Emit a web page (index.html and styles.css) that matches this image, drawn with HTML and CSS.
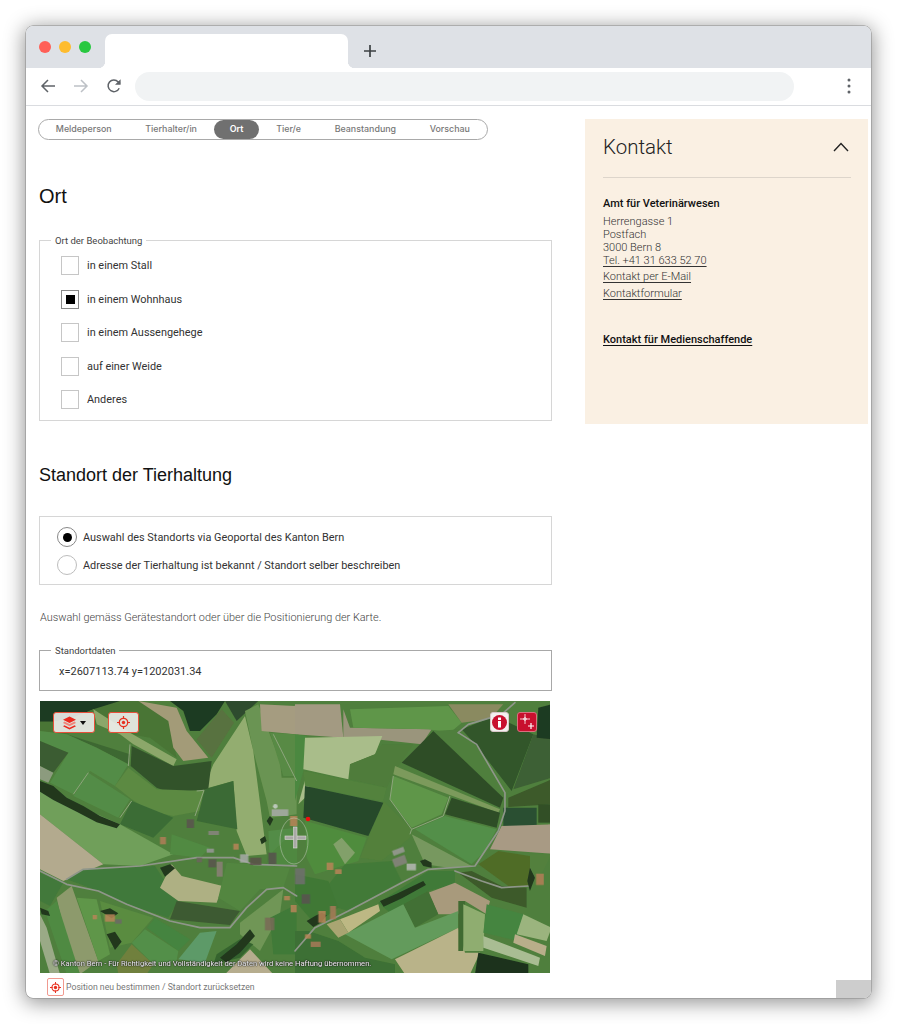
FILE: index.html
```html
<!DOCTYPE html>
<html lang="de">
<head>
<meta charset="utf-8">
<title>Ort</title>
<link rel="stylesheet" href="styles.css">
</head>
<body>
<div class="window">
  <div class="tabstrip">
    <div class="lights"><span class="light red"></span><span class="light yellow"></span><span class="light green"></span></div>
    <div class="tab"></div>
    <svg class="newtab" width="14" height="14" viewBox="0 0 14 14"><path d="M7 1v12M1 7h12" stroke="#3c4043" stroke-width="1.7" fill="none"/></svg>
  </div>
  <div class="toolbar">
    <svg class="tool" width="16" height="16" viewBox="0 0 16 16"><path d="M15 8H2M8 2L2 8l6 6" stroke="#5f6368" stroke-width="1.5" fill="none"/></svg>
    <svg class="tool" width="16" height="16" viewBox="0 0 16 16"><path d="M1 8h13M8 2l6 6-6 6" stroke="#bdc1c6" stroke-width="1.5" fill="none"/></svg>
    <svg class="tool" width="16" height="16" viewBox="0 0 16 16"><path d="M13.2 10.2A5.8 5.8 0 1 1 12.2 3.9L14 5.6" stroke="#5f6368" stroke-width="1.5" fill="none"/><path d="M14.6 1.2v5.6H9z" fill="#5f6368"/></svg>
    <div class="address"></div>
    <svg class="kebab" width="4" height="16" viewBox="0 0 4 16"><circle cx="2" cy="2" r="1.5" fill="#5f6368"/><circle cx="2" cy="8" r="1.5" fill="#5f6368"/><circle cx="2" cy="14" r="1.5" fill="#5f6368"/></svg>
  </div>
  <div class="page">
    <main class="main">
      <nav class="stepper">
        <span class="step">Meldeperson</span>
        <span class="step">Tierhalter/in</span>
        <span class="step active">Ort</span>
        <span class="step">Tier/e</span>
        <span class="step">Beanstandung</span>
        <span class="step">Vorschau</span>
      </nav>
      <h1 class="h-ort">Ort</h1>
      <fieldset class="box box-obs">
        <legend>Ort der Beobachtung</legend>
        <div class="check"><span class="cb"></span>in einem Stall</div>
        <div class="check"><span class="cb on"></span>in einem Wohnhaus</div>
        <div class="check"><span class="cb"></span>in einem Aussengehege</div>
        <div class="check"><span class="cb"></span>auf einer Weide</div>
        <div class="check"><span class="cb"></span>Anderes</div>
      </fieldset>
      <h2 class="h-standort">Standort der Tierhaltung</h2>
      <div class="box box-radio">
        <div class="radio"><span class="rb on"></span>Auswahl des Standorts via Geoportal des Kanton Bern</div>
        <div class="radio"><span class="rb"></span>Adresse der Tierhaltung ist bekannt / Standort selber beschreiben</div>
      </div>
      <p class="hint">Auswahl gemäss Gerätestandort oder über die Positionierung der Karte.</p>
      <fieldset class="box box-data">
        <legend>Standortdaten</legend>
        <div class="coords">x=2607113.74 y=1202031.34</div>
      </fieldset>
      <div class="map">
        <svg class="aerial" width="510" height="272" viewBox="0 0 510 272">
          <defs><filter id="soft" x="0" y="0" width="100%" height="100%"><feGaussianBlur stdDeviation="0.6"/></filter></defs>
          <g filter="url(#soft)">
          <rect width="510" height="272" fill="#4f7f3c"/>
          <g transform="scale(.3333)">
            <polygon fill="#1f3a22" points="0,0 240,0 230,30 160,25 100,50 40,62 0,62"/>
            <polygon fill="#4a7536" points="0,62 40,62 100,50 160,25 240,0 300,0 385,60 410,170 330,110 270,100 170,70 80,100 0,90"/>
            <polygon fill="#a39b78" points="295,0 410,20 440,90 505,170 430,180 400,140 385,60"/>
            <polygon fill="#1f3a22" points="390,0 555,0 530,40 480,90 450,90 430,30"/>
            <polygon fill="#58723f" points="545,25 582,65 515,170 470,115"/>
            <polygon fill="#2f4c2d" points="555,0 655,0 590,60"/>
            <polygon fill="#6b9452" points="615,30 655,10 720,180 725,230 770,230 770,340 690,350 680,300 640,150"/>
            <polygon fill="#a59c80" points="660,10 770,15 770,100 665,90"/>
            <polygon fill="#588a45" points="690,95 770,100 770,225 730,225"/>
            <polygon fill="#93ad70" points="615,45 640,150 680,460 620,465 590,390 580,240 490,265 520,190"/>
            <polygon fill="#8ca76a" points="160,25 270,95 410,175 400,195 280,130 240,100 170,70"/>
            <polygon fill="#3e6832" points="80,100 270,160 265,190 170,140"/>
            <polygon fill="#538c46" points="0,90 80,100 170,140 265,190 225,255 150,210 100,280 30,245 85,155 0,120"/>
            <polygon fill="#3a5c30" points="0,120 85,155 40,215 0,195"/>
            <polygon fill="#8c9b7e" points="0,195 40,215 25,245 0,235"/>
            <polygon fill="#33532c" points="275,135 400,195 515,180 505,265 390,275 350,260 272,195"/>
            <polygon fill="#5c8a42" points="265,200 350,265 490,270 480,330 400,345 330,330 275,295 225,255"/>
            <polygon fill="#538c46" points="145,215 270,295 235,350 100,285"/>
            <polygon fill="#3a6c36" points="275,300 400,350 340,410 240,370"/>
            <polygon fill="#3b6a34" points="495,265 580,240 592,385 470,360"/>
            <polygon fill="#6f9f5a" points="0,265 240,370 400,460 300,495 190,490 0,340"/>
            <polygon fill="#b3aa8e" points="0,340 190,490 70,540 0,505"/>
            <polygon fill="#518a43" points="395,400 510,440 480,470 390,460"/>
            <polygon fill="#538c46" points="685,390 770,380 770,490 690,490"/>
            <polygon fill="#41793a" points="80,535 130,505 345,495 415,600 385,650 260,610 175,570"/>
            <polygon fill="#aeb083" points="395,490 425,525 548,555 530,605 415,600 360,560"/>
            <polygon fill="#43793a" points="0,515 70,545 30,615 0,600"/>
            <polygon fill="#528640" points="560,485 640,490 750,500 730,560 660,565 600,630 535,590"/>
            <polygon fill="#3e5a32" points="410,600 600,630 570,672 390,655"/>
            <polygon fill="#6f9656" points="600,665 730,565 720,640 660,750 600,700"/>
            <polygon fill="#45843f" points="320,680 345,650 450,715 415,750"/>
            <polygon fill="#538f48" points="275,725 315,685 415,750 410,780 340,790"/>
            <polygon fill="#5d9a68" points="415,775 480,695 530,690 495,785"/>
            <polygon fill="#8d9a6c" points="50,590 95,555 175,780 120,820 75,700"/>
            <polygon fill="#5f9648" points="110,590 170,595 210,760 175,780"/>
            <polygon fill="#4f8a43" points="15,630 50,600 120,820 80,820"/>
            <polygon fill="#9aaa86" points="0,640 20,680 60,820 30,820 0,720"/>
            <polygon fill="#5a8c40" points="180,600 340,650 275,725 210,740"/>
            <polygon fill="#70803e" points="230,790 275,730 340,790 320,820 235,820"/>
            <polygon fill="#b6ad8e" points="555,820 630,745 700,820"/>
            <polygon fill="#35642f" points="530,760 600,715 640,730 600,770 520,790"/>
            <polygon fill="#3f7a38" points="690,650 770,610 770,760 700,760"/>
            <polygon fill="#4f8840" points="700,450 770,385 770,495 680,490"/>
          </g>
          <g transform="translate(255,0) scale(.3333)">
            <polygon fill="#a39a82" points="0,10 135,10 145,110 0,100"/>
            <polygon fill="#9a957c" points="145,25 165,80 410,85 380,130 200,110 145,110"/>
            <polygon fill="#5f964a" points="165,25 460,15 500,65 465,95 400,85 175,80"/>
            <polygon fill="#8a8a60" points="460,10 625,10 585,55 500,65"/>
            <polygon fill="#4c8840" points="0,100 35,105 25,210 0,300"/>
            <polygon fill="#4f7f3c" points="380,130 415,90 500,85 545,135 640,270 630,330 560,500 520,500 350,400 300,200"/>
            <polygon fill="#30562b" points="500,85 600,45 715,100 650,270 545,135"/>
            <polygon fill="#3d6034" points="715,100 770,115 770,230 655,265"/>
            <polygon fill="#1f3a22" points="730,20 770,10 770,115 725,110"/>
            <polygon fill="#3c5a2a" points="640,290 770,235 770,310 640,318"/>
            <polygon fill="#294f32" points="625,320 725,320 725,375 625,375"/>
            <polygon fill="#314f27" points="730,310 770,310 770,365 730,365"/>
            <polygon fill="#a89a84" points="620,375 770,370 770,458 585,445"/>
            <polygon fill="#a9bd8a" points="30,110 262,105 240,160 165,190 160,235 25,205"/>
            <polygon fill="#4f7b3a" points="165,190 240,160 262,130 355,130 295,215 275,260 165,235"/>
            <polygon fill="#2e4d28" points="320,185 415,90 625,290 615,320"/>
            <polygon fill="#7b9a5c" points="300,195 615,325 610,335 295,220"/>
            <polygon fill="#5f964a" points="295,225 460,290 440,340 350,380 285,295"/>
            <polygon fill="#2e4d28" points="470,290 615,335 605,380 450,340"/>
            <polygon fill="#528f48" points="360,385 450,345 605,385 570,450 530,490"/>
            <polygon fill="#77985e" points="350,400 530,495 460,500 390,490"/>
            <polygon fill="#52803a" points="265,300 345,380 345,410 260,480 195,470"/>
            <polygon fill="#a9bd8a" points="10,310 30,238 50,240 30,290"/>
            <polygon fill="#52823c" points="25,210 275,260 265,300 255,300 30,255"/>
            <polygon fill="#27482c" points="30,255 265,305 220,405 25,350"/>
            <polygon fill="#508c3e" points="30,360 215,410 190,480 60,520 35,470"/>
            <polygon fill="#506c28" points="550,490 610,450 705,465 705,555 640,555"/>
            <polygon fill="#52803e" points="705,460 770,460 745,510 705,550"/>
            <polygon fill="#3c5a2a" points="490,515 530,510 620,555 695,560 695,620 590,590"/>
            <polygon fill="#437a38" points="60,600 150,490 290,480 320,540 160,630"/>
            <polygon fill="#407a38" points="250,605 400,510 480,510 480,550 400,570 290,640"/>
            <polygon fill="#a89a7c" points="400,575 480,545 585,600 575,640 510,600 490,640 430,640"/>
            <polygon fill="#437034" points="325,610 400,570 430,640 360,680"/>
            <polygon fill="#639b5c" points="150,700 325,610 360,680 490,630 490,680 290,775"/>
            <polygon fill="#b9b389" points="300,775 490,680 510,755 555,755 525,820 330,820"/>
            <polygon fill="#406a30" points="490,600 510,600 505,750 490,750"/>
            <polygon fill="#8fad70" points="505,610 570,640 565,750 505,750"/>
            <polygon fill="#458540" points="575,610 685,640 670,720 565,695"/>
            <polygon fill="#9bb47e" points="685,640 770,680 755,720 665,700"/>
            <polygon fill="#b8ae8a" points="660,700 755,735 750,765 655,725"/>
            <polygon fill="#a9bd93" points="565,705 735,770 730,795 565,740"/>
            <polygon fill="#1a321e" points="550,755 700,790 700,820 540,820"/>
            <polygon fill="#bdb884" points="135,655 250,610 255,630 160,695"/>
            <polygon fill="#a9a572" points="95,670 135,655 160,695 130,710"/>
            <polygon fill="#3c7034" points="0,690 40,690 130,720 210,770 300,790 300,820 0,820"/>
            <polygon fill="#3f7836" points="0,520 100,540 130,620 60,670 0,600"/>
            <polygon fill="#82a06a" points="115,430 140,410 180,455 150,490"/>
          </g>
          <g transform="scale(.3333)" fill="none" stroke="#8f968a" stroke-width="5" stroke-linecap="round" stroke-linejoin="round">
            <path d="M0 510L80 550 175 570 260 610 390 660 480 680 570 680 620 620 680 565 730 560 770 585"/>
            <path d="M80 535L130 505 300 495 470 470 580 470 640 490 770 495"/>
            <path d="M1255 95L1310 130 1395 275 1395 330 1375 390 1305 495 1165 505 1085 545 925 630 825 680 765 750"/>
            <path d="M1255 95L1285 70 1385 40 1425 5"/>
            <path d="M1245 510L1325 540 1385 560 1465 555"/>
          </g>
          <g transform="scale(.3333)" fill="none" stroke="#8ea57c" stroke-width="3">
            <path d="M1060 225L1050 295 1115 385 1110 400M1230 285L1210 345 1115 385"/>
            <path d="M700 100L770 240M470 270L492 268 465 345M270 130L265 195M145 215L100 280M275 300L240 350"/>
          </g>
          <g transform="scale(.3333)" fill="#20381f">
            <path d="M0 240l40 15 40 35 50 25 50 30 60 25-10 12-60-18-60-32-70-35-40-25z"/>
            <path d="M360 500l30-10 15 12-30 25z"/>
            <path d="M180 630l30-8 25 15-20 15zM200 700l25-8 20 30-20 25z"/>
            <path d="M540 770l50-40 40-45 15 20-45 50-40 30z"/>
            <path d="M680 360l10-15 10 10-10 20zM660 415l15-10 5 15-15 10zM800 660l25-15 20-10 15 8-15 20-25 15z"/>
            <path d="M1020 600l50-22 80-38 8 12-72 40-55 25z"/>
            <path d="M0 620l25 10 5 15-25-5z"/>
            <path d="M1140 480l15-5 20 10 0 15-25-5zM1470 500l15 30-15 40-8-30z"/>
          </g>
          <g transform="scale(.3333)" opacity=".85">
            <rect x="695" y="325" width="50" height="20" fill="#a8aaa8"/><rect x="750" y="345" width="22" height="30" fill="#b98558"/>
            <circle cx="706" cy="316" r="7" fill="#c9d0cc"/>
            <rect x="440" y="355" width="22" height="26" fill="#5a5450"/><rect x="505" y="390" width="32" height="12" fill="#8a8680"/>
            <rect x="360" y="408" width="18" height="22" fill="#b07e58"/><rect x="580" y="428" width="16" height="18" fill="#b98558"/>
            <rect x="500" y="443" width="22" height="12" fill="#999"/><rect x="600" y="460" width="25" height="25" fill="#a8aca8"/>
            <rect x="630" y="470" width="34" height="22" fill="#5c524a"/><rect x="685" y="455" width="24" height="34" fill="#57524e"/>
            <rect x="505" y="475" width="24" height="24" fill="#5a5450"/><rect x="530" y="482" width="18" height="45" fill="#8c8078"/>
            <rect x="470" y="470" width="16" height="14" fill="#6c645e"/>
            <rect x="195" y="640" width="30" height="22" fill="#b98558"/><rect x="158" y="642" width="13" height="13" fill="#b98558"/>
            <rect x="225" y="655" width="20" height="13" fill="#6c6a66"/><rect x="675" y="650" width="28" height="38" fill="#7a6a58"/>
            <rect x="732" y="585" width="18" height="13" fill="#b98558"/><rect x="752" y="612" width="18" height="22" fill="#b98558"/>
            <rect x="860" y="485" width="20" height="22" fill="#b98558"/><rect x="885" y="505" width="20" height="14" fill="#b98558"/>
            <rect x="765" y="502" width="30" height="48" fill="#70706e"/><rect x="785" y="580" width="25" height="28" fill="#5a5450"/>
            <rect x="835" y="630" width="22" height="35" fill="#b98558"/><rect x="870" y="615" width="18" height="40" fill="#a87a58"/>
            <rect x="795" y="700" width="18" height="13" fill="#b98558"/><rect x="812" y="722" width="30" height="16" fill="#a87a58"/>
            <rect x="1058" y="445" width="36" height="16" fill="#9b9b98" transform="rotate(-20 1070 454)"/>
            <rect x="1060" y="470" width="40" height="26" fill="#888480" transform="rotate(-20 1072 484)"/>
            <rect x="1100" y="488" width="28" height="20" fill="#b8bab6"/>
            <rect x="1488" y="518" width="24" height="34" fill="#b47f58"/>
          </g>
          <ellipse cx="254" cy="140" rx="14" ry="23" fill="none" stroke="#d9dbd4" stroke-width=".8" opacity=".55"/>
          <g fill="#a9a9a6" stroke="#dcdcd8" stroke-width=".6">
            <rect x="245" y="135" width="21" height="3.500"/>
            <rect x="253.500" y="126" width="3.500" height="21"/>
          </g>
          <circle cx="268" cy="118" r="2.300" fill="#f01010"/>
          </g>
        </svg>
        <button class="mapbtn layers" type="button">
          <svg width="13" height="14" viewBox="0 0 14 14"><path d="M7 0l7 3.500-7 3.500-7-3.500z" fill="#ec2a1e"/><path d="M1.500 5.500L7 8.200 12.500 5.500 14 7l-7 3.500L0 7z" fill="#f0857a"/><path d="M1.500 9.500L7 12.200l5.500-2.700L14 10.500 7 14 0 10.500z" fill="#ec2a1e"/></svg>
          <span class="caret"></span>
        </button>
        <button class="mapbtn locate" type="button">
          <svg width="13" height="13" viewBox="0 0 13 13"><g fill="none" stroke="#e8301f"><circle cx="6.500" cy="6.500" r="4.200" stroke-width="1.300"/><path d="M6.500 0v3M6.500 10v3M0 6.500h3M10 6.500h3" stroke-width="1.200"/></g><circle cx="6.500" cy="6.500" r="1.700" fill="#e8301f"/></svg>
        </button>
        <button class="mapbtn info" type="button">
          <svg width="15" height="15" viewBox="0 0 15 15"><circle cx="7.500" cy="7.500" r="7.500" fill="#c8102e"/><rect x="6" y="2.500" width="3" height="2.500" fill="#fff"/><rect x="6" y="6" width="3" height="6.500" fill="#fff"/></svg>
        </button>
        <button class="mapbtn measure" type="button">
          <svg width="16" height="16" viewBox="0 0 16 16"><g fill="none" stroke="#fff" stroke-width=".8"><path d="M1 5h10M6 0v10"/><circle cx="6" cy="5" r="1.300"/><path d="M12 9v6M9 12h6" stroke-width="1.200"/></g></svg>
        </button>
        <div class="copyright">© Kanton Bern - Für Richtigkeit und Vollständigkeit der Daten wird keine Haftung übernommen.</div>
      </div>
      <div class="reset">
        <span class="reset-icon"><svg width="11" height="11" viewBox="0 0 13 13"><g fill="none" stroke="#e8301f"><circle cx="6.500" cy="6.500" r="4.200" stroke-width="1.300"/><path d="M6.500 0v3M6.500 10v3M0 6.500h3M10 6.500h3" stroke-width="1.200"/></g><circle cx="6.500" cy="6.500" r="2" fill="#e8301f"/></svg></span>
        Position neu bestimmen / Standort zurücksetzen
      </div>
    </main>
    <aside class="contact">
      <div class="contact-head">
        <h2 class="contact-title">Kontakt</h2>
        <svg width="16" height="10" viewBox="0 0 16 10"><path d="M1 9l7-7.500L15 9" fill="none" stroke="#222" stroke-width="1.400"/></svg>
      </div>
      <div class="contact-name">Amt für Veterinärwesen</div>
      <div class="contact-addr">Herrengasse 1<br>Postfach<br>3000 Bern 8<br><a href="#">Tel. +41 31 633 52 70</a></div>
      <div class="contact-link"><a href="#">Kontakt per E-Mail</a></div>
      <div class="contact-link"><a href="#">Kontaktformular</a></div>
      <div class="contact-media"><a href="#">Kontakt für Medienschaffende</a></div>
    </aside>
    <div class="totop"></div>
  </div>
</div>
</body>
</html>
```
FILE: styles.css
```css
* { box-sizing: border-box; }
html, body { margin: 0; background: #fff; height: 100%; overflow: hidden; }
body { padding: 26px 26px 0; font-family: Roboto, "Liberation Sans", sans-serif; }

.window {
  width: 845px;
  height: 972px;
  border-radius: 7px;
  overflow: hidden;
  background: #fff;
  display: flex;
  flex-direction: column;
  box-shadow: 0 0 0 .5px #8a8a8a, 0 3px 20px 2px rgba(0,0,0,.42);
}

.tabstrip {
  height: 42px;
  background: #dee1e6;
  display: flex;
  align-items: flex-start;
  padding: 8px 0 0 13px;
  flex: none;
}
.lights { display: flex; gap: 8px; padding-top: 7px; width: 66px; }
.light { width: 12px; height: 12px; border-radius: 50%; }
.red { background: #ff5f57; }
.yellow { background: #febc2e; }
.green { background: #28c840; }
.tab {
  width: 243px;
  height: 34px;
  background: #fff;
  border-radius: 7px 7px 0 0;
  position: relative;
}
.tab::before, .tab::after {
  content: "";
  position: absolute;
  bottom: 0;
  width: 7px;
  height: 7px;
}
.tab::before { left: -7px; background: radial-gradient(circle at 0 0, #dee1e6 7px, #fff 7.5px); }
.tab::after { right: -7px; background: radial-gradient(circle at 100% 0, #dee1e6 7px, #fff 7.5px); }
.newtab { margin: 10px 0 0 15px; }

.toolbar {
  height: 38px;
  flex: none;
  background: #fff;
  border-bottom: 1px solid #dadce0;
  display: flex;
  align-items: center;
  padding: 0 20px 1px 14px;
  gap: 17px;
}
.tool { flex: none; }
.address {
  width: 659px;
  height: 29px;
  background: #f1f3f4;
  border-radius: 15px;
  margin: 0 36px 0 -4px;
}
.kebab { flex: none; margin-left: 0; }

.page {
  flex: 1;
  min-height: 0;
  display: flex;
  position: relative;
  padding: 11px 0 0 13px;
  overflow: hidden;
}
.main { width: 513px; flex: none; }

.stepper {
  display: inline-flex;
  height: 21px;
  margin-left: -1px;
  border: 1px solid #a9a9a9;
  border-radius: 11px;
  font-family: Inter, Roboto, sans-serif;
  font-size: 8.900px;
  font-weight: 500;
  color: #777;
  align-items: center;
}
.step { padding: 0 16.800px; height: 19px; line-height: 18px; white-space: nowrap; border-radius: 10px; }
.step.active { background: #707070; color: #fff; font-weight: 600; padding: 0 16px; }

.h-ort {
  font-family: "Liberation Sans", Arial, sans-serif;
  font-weight: 400;
  font-size: 20px;
  line-height: 24px;
  color: #111;
  margin: 44px 0 0;
}
.h-standort {
  font-family: "Liberation Sans", Arial, sans-serif;
  font-weight: 400;
  font-size: 18px;
  line-height: 22px;
  color: #111;
  margin: 43px 0 0;
}

.box {
  border: 1px solid #d6d6d6;
  margin: 0;
  padding: 0;
  min-width: 0;
  width: 513px;
}
legend {
  font-size: 9.500px;
  color: #444;
  padding: 0 4px;
  margin-left: 11px;
  line-height: 11px;
}
.box-obs { margin-top: 27px; height: 186px; padding-top: 3px; }
.check {
  display: flex;
  align-items: center;
  gap: 8px;
  height: 33.500px;
  margin-left: 21px;
  font-size: 10.900px;
  color: #333;
}
.cb {
  width: 18px;
  height: 19px;
  border: 1px solid #c6c6c6;
  display: flex;
  align-items: center;
  justify-content: center;
  flex: none;
}
.cb.on { border-color: #8a8a8a; }
.cb.on::after { content: ""; width: 9px; height: 9px; background: #000; }

.box-radio { margin-top: 30px; height: 69px; padding: 10px 0 0 17px; }
.radio {
  display: flex;
  align-items: center;
  gap: 6px;
  height: 20px;
  margin-bottom: 8px;
  font-size: 10.900px;
  color: #333;
}
.rb {
  width: 20px;
  height: 20px;
  border-radius: 50%;
  border: 1px solid #bdbdbd;
  display: flex;
  align-items: center;
  justify-content: center;
  flex: none;
}
.rb.on { border-color: #888; }
.rb.on::after { content: ""; width: 9px; height: 9px; border-radius: 50%; background: #000; }

.hint {
  margin: 26px 0 0 1px;
  font-size: 10.900px;
  line-height: 14px;
  font-weight: 300;
  color: #444;
}
.box-data { margin-top: 20px; height: 46px; border-color: #a8a8a8; padding-left: 19px; }
.box-data legend { margin-left: -8px; }
.coords { font-size: 11px; line-height: 14px; color: #333; padding-top: 9px; }

.map {
  position: relative;
  width: 510px;
  height: 272px;
  margin: 10px 0 0 1px;
}
.aerial { display: block; }
.mapbtn {
  position: absolute;
  padding: 0;
  display: flex;
  align-items: center;
  justify-content: center;
  border-radius: 3px;
  background: rgba(238,238,236,.9);
  border: 1px solid #e8503a;
}
.layers { left: 13px; top: 11px; width: 42px; height: 21px; gap: 4px; justify-content: flex-start; padding-left: 9px; }
.caret { width: 0; height: 0; border: 3px solid transparent; border-top: 4px solid #111; border-bottom: 0; }
.locate { left: 68px; top: 11px; width: 31px; height: 21px; }
.info { left: 450px; top: 11px; width: 19px; height: 20px; background: #f3f1ef; border: 1px solid #d8c8c8; }
.measure { left: 477px; top: 11px; width: 20px; height: 20px; background: #c8102e; border-color: #d9707f; }
.copyright {
  position: absolute;
  left: 13px;
  bottom: 4px;
  font-size: 7.600px;
  line-height: 10px;
  white-space: nowrap;
  color: #eee;
  text-shadow: 0 0 1px #222, 0 0 1px #222, 0 0 2px #222;
}

.reset {
  display: flex;
  align-items: center;
  gap: 2px;
  margin: 5px 0 0 8px;
  font-size: 8.700px;
  color: #777;
}
.reset-icon {
  width: 17px;
  height: 18px;
  border: 1px solid #f09a90;
  border-radius: 2px;
  display: flex;
  align-items: center;
  justify-content: center;
  flex: none;
}

.contact {
  width: 283px;
  height: 305px;
  flex: none;
  margin: 2px 0 0 33px;
  background: #faf0e3;
  padding: 0 17px 0 18px;
  color: #444;
  font-size: 11px;
  font-weight: 300;
}
.contact a { color: inherit; text-decoration: underline; text-underline-offset: 2px; text-decoration-thickness: 1px; }
.contact-head {
  height: 59px;
  border-bottom: 1px solid #ddd5cb;
  display: flex;
  justify-content: space-between;
  align-items: center;
  padding: 0 2px 2px 0;
}
.contact-title { margin: 0; font-size: 20.500px; font-weight: 300; color: #222; line-height: 26px; }
.contact-name { margin-top: 19px; font-weight: 500; color: #111; line-height: 14px; }
.contact-addr { margin-top: 4px; line-height: 13px; color: #333; }
.contact-link { margin-top: 3px; line-height: 13.500px; color: #333; }
.contact-media { margin-top: 33px; font-weight: 500; color: #111; line-height: 14px; }
.totop {
  position: absolute;
  right: 0;
  bottom: 0;
  width: 35px;
  height: 18px;
  background: #cdcdcd;
}
```
